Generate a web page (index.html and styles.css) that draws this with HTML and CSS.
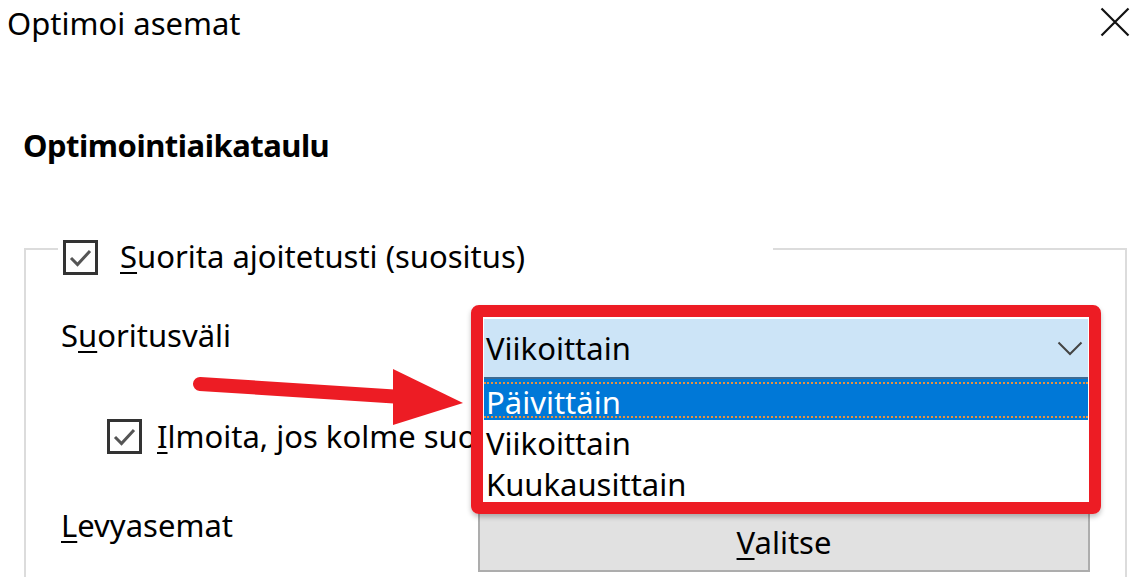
FILE: index.html
```html
<!DOCTYPE html>
<html lang="fi">
<head>
<meta charset="utf-8">
<title>Optimoi asemat</title>
<link rel="stylesheet" href="styles.css">
</head>
<body>
<div class="dialog">
  <header class="titlebar">
    <span class="title">Optimoi asemat</span>
    <button class="close" type="button" aria-label="Sulje">
      <svg viewBox="0 0 30 30" width="30" height="30"><path d="M1.5 1.5 L28.5 28.5 M28.5 1.5 L1.5 28.5"/></svg>
    </button>
  </header>

  <h2 class="section-title">Optimointiaikataulu</h2>

  <div class="group">
    <div class="group-head">
      <span class="checkbox">
        <svg viewBox="0 0 35 35" width="35" height="35"><rect x="1.5" y="1.5" width="32" height="32"/><path d="M8 18 L14.5 24.5 L27 11"/></svg>
      </span>
      <span class="head-text"><u>S</u>uorita ajoitetusti (suositus)</span>
    </div>

    <div class="group-body">
      <span class="field-label">S<u>u</u>oritusväli</span>
      <div class="combo-wrap">
        <div class="combo">
          <span class="combo-value">Viikoittain</span>
          <svg class="chevron" viewBox="0 0 26 15" width="26" height="15"><path d="M1.5 1.5 L13 13 L24.5 1.5"/></svg>
        </div>
        <ul class="combo-list">
          <li class="selected">Päivittäin</li>
          <li>Viikoittain</li>
          <li>Kuukausittain</li>
        </ul>
        <div class="highlight-frame"></div>
      </div>

      <div class="notify-row">
        <span class="checkbox">
          <svg viewBox="0 0 35 35" width="35" height="35"><rect x="1.5" y="1.5" width="32" height="32"/><path d="M8 18 L14.5 24.5 L27 11"/></svg>
        </span>
        <span class="notify-text"><u>I</u>lmoita, jos kolme suoritusta jää väliin</span>
      </div>

      <span class="field-label drives"><u>L</u>evyasemat</span>
      <button class="push" type="button"><u>V</u>alitse</button>
    </div>
  </div>

  <svg class="pointer-arrow" viewBox="0 0 280 75" width="280" height="75">
    <path class="shaft" d="M10 24 L212 37"/>
    <polygon points="203,9 273,43 203,65"/>
  </svg>
</div>
</body>
</html>
```

FILE: styles.css
```css
html, body {
  margin: 0;
  padding: 0;
  background: #fff;
}

body {
  width: 1131px;
  height: 577px;
  overflow: hidden;
  font-family: "Noto Sans", "Open Sans", sans-serif;
  font-size: 31px;
  line-height: 40px;
  color: #000;
}

.dialog {
  position: relative;
  height: 577px;
  overflow: hidden;
}

/* title bar */
.titlebar {
  display: flex;
  justify-content: space-between;
  align-items: flex-start;
  padding: 3px 1px 0 7px;
}

.title {
  line-height: 40px;
}

.close {
  margin: 4px 0 0;
  padding: 0;
  border: 0;
  background: none;
  width: 30px;
  height: 30px;
  display: block;
}

.close svg {
  display: block;
}

.close path {
  stroke: #111;
  stroke-width: 2.2;
  fill: none;
}

/* section heading */
.section-title {
  margin: 82px 0 0 23px;
  font-size: 31px;
  font-weight: 700;
  line-height: 40px;
  letter-spacing: -0.5px;
}

/* group box, open at the bottom */
.group {
  margin: 83px 0 0 24px;
  width: 1103px;
  box-sizing: border-box;
  border: 2px solid #dcdcdc;
  border-bottom: none;
  padding: 0 37px 5px 35px;
}

.group-head {
  display: flex;
  align-items: center;
  width: 715px;
  height: 40px;
  margin: -14px 0 0 -3px;
  padding-left: 5px;
  box-sizing: border-box;
  background: #fff;
  white-space: nowrap;
}

.checkbox {
  display: block;
  width: 35px;
  height: 35px;
  flex: none;
}

.checkbox svg {
  display: block;
}

.checkbox rect {
  fill: #fff;
  stroke: #333;
  stroke-width: 3;
}

.checkbox path {
  fill: none;
  stroke: #555;
  stroke-width: 3;
}

.group-head .checkbox {
  margin-top: 2px;
}

.head-text {
  margin-left: 22px;
}

u {
  text-decoration-thickness: 2px;
  text-underline-offset: 4px;
}

.group-body {
  display: grid;
  grid-template-columns: 423px 604px;
  align-items: start;
  margin-top: 39px;
}

.field-label {
  line-height: 40px;
  white-space: nowrap;
}

/* combo box with its open list */
.combo-wrap {
  position: relative;
  margin-top: 4px;
  z-index: 2;
}

.combo {
  display: flex;
  align-items: center;
  justify-content: space-between;
  height: 58px;
  padding: 0 5px 0 2px;
  background: #cce4f7;
}

.chevron {
  display: block;
}

.chevron path {
  fill: none;
  stroke: #444;
  stroke-width: 2;
}

.combo-list {
  position: absolute;
  top: 100%;
  left: 0;
  right: 0;
  margin: 0;
  padding: 0;
  list-style: none;
  background: #fff;
  border-top: 2px solid #3d6b94;
}

.combo-list li {
  height: 41px;
  box-sizing: border-box;
  padding: 5px 0 0 2px;
  line-height: 36px;
}

.combo-list .selected {
  position: relative;
  background: #0078d7;
  color: #fff;
}

/* focus marks drawn as dotted rules above and below the item */
.combo-list .selected::before {
  content: "";
  position: absolute;
  left: 0;
  right: 0;
  top: 3px;
  bottom: 2px;
  border-top: 2px dotted #e59243;
  border-bottom: 2px dotted #e59243;
}

.highlight-frame {
  position: absolute;
  left: -13px;
  right: -13px;
  top: -14px;
  bottom: -137px;
  border: 12px solid #ed1c24;
  border-radius: 8px;
  box-shadow: 0 3px 5px rgba(0, 0, 0, 0.25);
}

.notify-row {
  grid-column: 1 / -1;
  display: flex;
  align-items: center;
  height: 40px;
  margin: 39px 0 0 46px;
  white-space: nowrap;
}

.notify-text {
  margin-left: 15px;
  width: 314px;
  overflow: hidden;
}

.drives {
  margin-top: 49px;
}

.push {
  margin: 56px 0 0 -6px;
  width: 612px;
  height: 60px;
  box-sizing: border-box;
  border: 2px solid #adadad;
  background: #e1e1e1;
  font: inherit;
  color: #000;
  padding: 0;
}

/* annotation arrow */
.pointer-arrow {
  position: absolute;
  left: 190px;
  top: 360px;
  z-index: 3;
}

.pointer-arrow .shaft {
  stroke: #ed1c24;
  stroke-width: 14;
  stroke-linecap: round;
  fill: none;
}

.pointer-arrow polygon {
  fill: #ed1c24;
}
```
